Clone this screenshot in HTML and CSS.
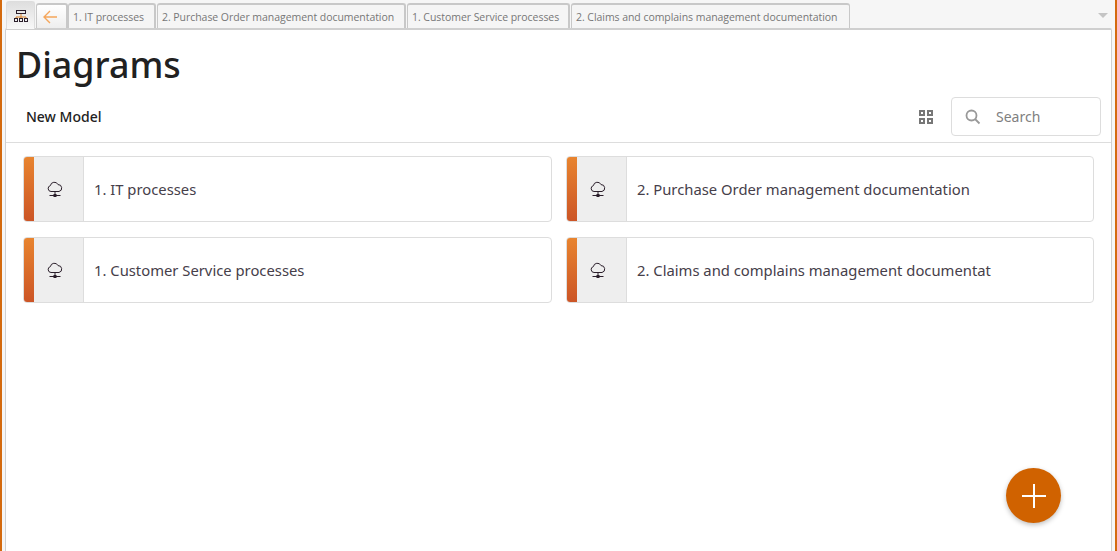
FILE: index.html
```html
<!DOCTYPE html>
<html lang="en">
<head>
    <meta charset="UTF-8">
    <title>Diagrams</title>
    <link rel="stylesheet" href="styles.css">
</head>
<body>
    <div class="window">
        <nav class="tabs">
            <a class="tab tab-home">
                <svg width="16" height="14" viewBox="0 0 16 14" fill="none">
                    <rect x="3.5" y="1.5" width="9" height="3" stroke="#2b1f2b"/>
                    <path d="M8 5v3M3 8h10M3 8v1M8 8v1M13 8v1" stroke="#d9822b"/>
                    <rect x="1.5" y="9.5" width="3" height="3" stroke="#2b1f2b"/>
                    <rect x="6.5" y="9.5" width="3" height="3" stroke="#2b1f2b"/>
                    <rect x="11.5" y="9.5" width="3" height="3" stroke="#2b1f2b"/>
                </svg>
            </a>
            <a class="tab tab-back">
                <svg width="14" height="14" viewBox="0 0 14 14" fill="none" stroke="#f5a65b" stroke-width="1.4">
                    <path d="M1 7h13M7 1L1 7l6 6"/>
                </svg>
            </a>
            <a class="tab tab-it">1. IT processes</a>
            <a class="tab tab-po">2. Purchase Order management documentation</a>
            <a class="tab tab-cs">1. Customer Service processes</a>
            <a class="tab tab-claims">2. Claims and complains management documentation</a>
            <span class="tabs-caret"></span>
        </nav>

        <main class="panel">
            <h1>Diagrams</h1>
            <div class="toolbar">
                <span class="new-model">New Model</span>
                <svg class="grid-icon" width="14" height="14" viewBox="0 0 14 14" fill="none" stroke="#777" stroke-width="2">
                    <rect x="1" y="1" width="4" height="4"/>
                    <rect x="9" y="1" width="4" height="4"/>
                    <rect x="1" y="9" width="4" height="4"/>
                    <rect x="9" y="9" width="4" height="4"/>
                </svg>
                <div class="search">
                    <svg width="16" height="16" viewBox="0 0 16 16" fill="none" stroke="#999" stroke-width="1.8">
                        <circle cx="6.5" cy="6.5" r="5"/>
                        <path d="M10 10l4.5 4.5"/>
                    </svg>
                    <span>Search</span>
                </div>
            </div>

            <div class="card-grid" id="card-grid">
                <!-- Cards rendered by script below -->
            </div>

            <button class="fab" aria-label="Add">
                <svg width="24" height="24" viewBox="0 0 24 24" stroke="#fff" stroke-width="2">
                    <path d="M12 0v24M0 12h24"/>
                </svg>
            </button>
        </main>
    </div>

    <template id="card-template">
        <div class="card">
            <div class="card-stripe"></div>
            <div class="card-icon">
                <svg width="16" height="17" viewBox="0 0 16 17" fill="none" stroke="#2b1f2b">
                    <path d="M4 10.5a3 3 0 0 1-.6-5.9A4 4 0 0 1 11 3.6a3.5 3.5 0 0 1 1 6.9z"/>
                    <path d="M8 10.5v3M2.5 14.5h11"/>
                    <rect x="7" y="13.5" width="2" height="2" fill="#2b1f2b"/>
                </svg>
            </div>
            <div class="card-name"></div>
        </div>
    </template>

    <script>
        const diagrams = [
            '1. IT processes',
            '2. Purchase Order management documentation',
            '1. Customer Service processes',
            '2. Claims and complains management documentat'
        ];
        const grid = document.getElementById('card-grid');
        const template = document.getElementById('card-template');
        diagrams.forEach(name => {
            const card = template.content.cloneNode(true);
            card.querySelector('.card-name').textContent = name;
            grid.appendChild(card);
        });
    </script>
</body>
</html>
```

FILE: styles.css
```css
* {
    margin: 0;
    padding: 0;
    box-sizing: border-box;
}

html, body {
    height: 100%;
    overflow: hidden;
}

body {
    font-family: 'Noto Sans', sans-serif;
    color: #222;
    background-color: #fff;
}

.window {
    height: 100%;
    display: flex;
    flex-direction: column;
    border-left: 2px solid #d46a0e;
    border-right: 2px solid #d46a0e;
    background-color: #f6f6f6;
    padding: 0 3px 0 2px;
}

.tabs {
    height: 29px;
    display: flex;
    align-items: flex-end;
    flex-shrink: 0;
    margin-bottom: -1px;
    position: relative;
}

.tab {
    height: 26px;
    display: flex;
    align-items: center;
    padding-left: 4px;
    font-family: 'Open Sans', sans-serif;
    font-size: 10.5px;
    letter-spacing: -0.05px;
    color: #777;
    background-color: #f5f5f5;
    border: 2px solid #c8c8c8;
    border-bottom: none;
    border-left-width: 1px;
    border-radius: 3px 3px 0 0;
    margin-right: 1px;
    white-space: nowrap;
}

.tab-home {
    width: 29px;
    height: 28px;
    justify-content: center;
    padding-left: 0;
    margin-right: 1px;
    margin-left: 2px;
    border: 1px solid #ddd;
    border-bottom: none;
    background: linear-gradient(#dedede, #f8f8f8);
    position: relative;
    z-index: 1;
}

.tab-back {
    width: 32px;
    justify-content: center;
    padding: 0 4px 0 0;
    margin-right: 0;
    background: linear-gradient(#fff, #eee);
    border-bottom: 1px solid #c8c8c8;
}

.tab-it { width: 88px; }
.tab-po { width: 249px; }
.tab-cs { width: 163px; }
.tab-claims { width: 279px; border-right-width: 1px; }

.tabs-caret {
    margin: 0 4px 11px auto;
    border-left: 5px solid transparent;
    border-right: 5px solid transparent;
    border-top: 5px solid #c4c4c4;
}

.panel {
    flex: 1;
    position: relative;
    background-color: #fff;
    border: 1px solid #d0d0d0;
    border-top: 2px solid #cfcfcf;
    border-bottom: none;
    margin-left: 1px;
    margin-right: 0;
    border-radius: 2px 2px 0 0;
}

h1 {
    font-size: 35.8px;
    font-weight: 500;
    line-height: 48px;
    color: #212121;
    padding: 10px 0 0 10px;
}

.toolbar {
    height: 54px;
    display: flex;
    align-items: center;
    padding: 2px 10px 0 20px;
    border-bottom: 1px solid #ddd;
    margin-top: 1px;
}

.new-model {
    font-size: 14px;
    font-weight: 500;
    color: #222;
    margin-right: auto;
}

.grid-icon {
    margin-right: 18px;
}

.search {
    width: 150px;
    height: 39px;
    display: flex;
    align-items: center;
    gap: 15px;
    padding-left: 13px;
    border: 1px solid #ddd;
    border-radius: 4px;
    font-size: 14px;
    color: #808080;
}

.card-grid {
    display: grid;
    grid-template-columns: 529px 528px;
    column-gap: 14px;
    row-gap: 15px;
    padding: 13px 0 0 17px;
}

.card {
    height: 66px;
    display: flex;
    border: 1px solid #ddd;
    border-radius: 4px;
    overflow: hidden;
    background-color: #fff;
}

.card-stripe {
    width: 10px;
    background: linear-gradient(#e8842f, #cc5526);
}

.card-icon {
    width: 50px;
    display: flex;
    align-items: center;
    justify-content: center;
    padding-right: 8px;
    background-color: #eee;
    border-right: 1px solid #ddd;
}

.card-name {
    display: flex;
    align-items: center;
    padding-left: 10px;
    font-size: 14.8px;
    color: #46404a;
    white-space: nowrap;
}

.fab {
    position: absolute;
    right: 50px;
    bottom: 28px;
    width: 55px;
    height: 55px;
    display: flex;
    align-items: center;
    justify-content: center;
    border: none;
    border-radius: 50%;
    background-color: #d06200;
    box-shadow: 0 2px 5px rgba(0, 0, 0, 0.25);
}
```
